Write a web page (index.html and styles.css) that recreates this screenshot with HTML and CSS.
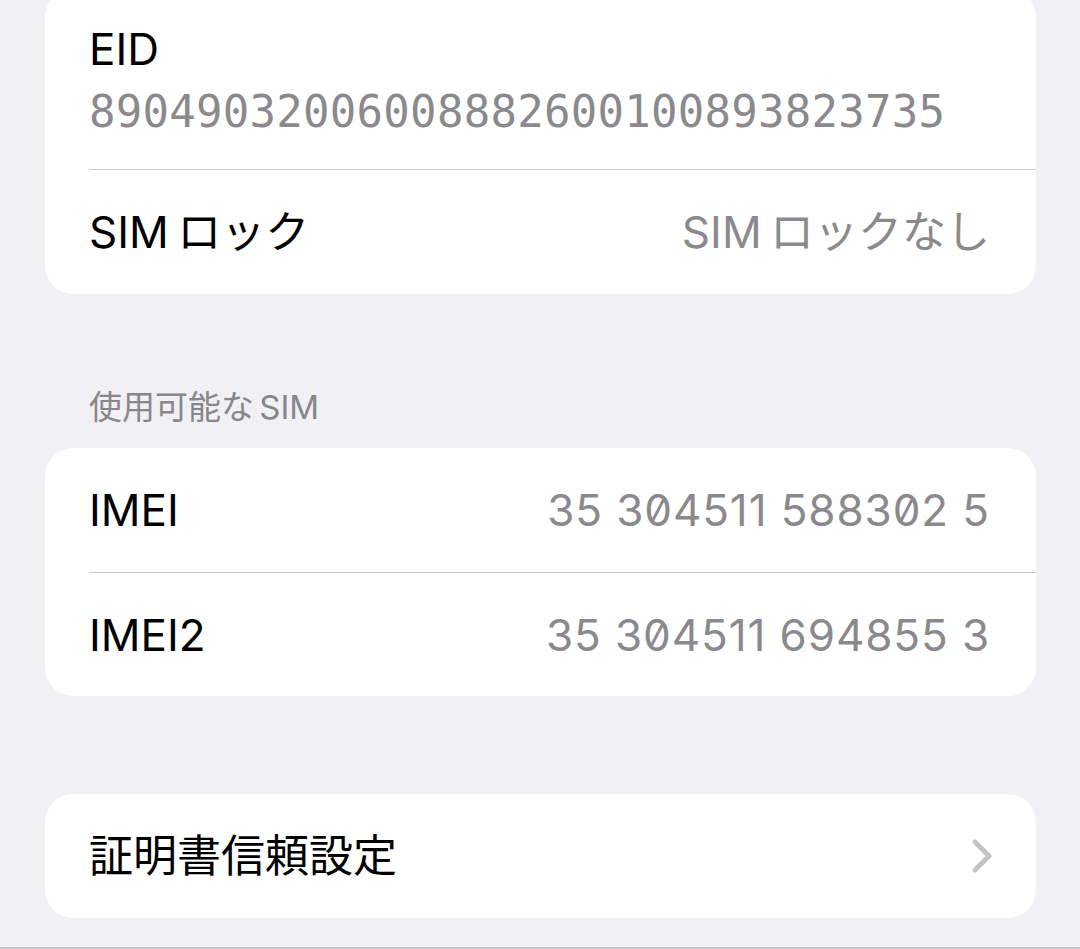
FILE: index.html
```html
<!DOCTYPE html>
<html lang="ja">
<head>
  <meta charset="UTF-8">
  <title>情報</title>
  <link rel="stylesheet" href="styles.css">
</head>
<body>

<div class="page">
  <div class="group group-first">
    <div class="row row-stack">
      <div class="label">EID</div>
      <div class="eid">89049032006008882600100893823735</div>
    </div>
    <div class="row">
      <div class="label mixed">SIM ロック</div>
      <div class="value mixed">SIM ロックなし</div>
    </div>
  </div>

  <div class="section-title mixed">使用可能な SIM</div>
  <div class="group">
    <div class="row">
      <div class="label">IMEI</div>
      <div class="value num">35 304511 588302 5</div>
    </div>
    <div class="row">
      <div class="label">IMEI2</div>
      <div class="value num">35 304511 694855 3</div>
    </div>
  </div>

  <div class="group group-last">
    <div class="row">
      <div class="label">証明書信頼設定</div>
      <svg class="chevron" width="20" height="34" viewBox="0 0 20 34">
        <path d="M3 3 L17 17 L3 31" fill="none" stroke="#c4c4c7" stroke-width="5" stroke-linecap="round" stroke-linejoin="round"/>
      </svg>
    </div>
  </div>
</div>

</body>
</html>
```

FILE: styles.css
```css
html, body {
  margin: 0;
  padding: 0;
}
body {
  background-color: #f0f0f5;
  font-family: Inter, "Noto Sans CJK JP", sans-serif;
  color: #000;
  overflow: hidden;
}
.page {
  height: 949px;
  box-sizing: border-box;
  border-bottom: 2px solid #c6c6ca;
  padding: 0 44px 0 45px;
  overflow: hidden;
}
.group {
  background-color: #fff;
  border-radius: 28px;
  padding-left: 44px;
}
.group-first {
  margin-top: -11px;
}
.group-first .row {
  height: 125px;
}
.group-last {
  margin-top: 98px;
}
.row {
  display: flex;
  align-items: center;
  justify-content: space-between;
  height: 124px;
  padding-right: 46px;
  box-sizing: border-box;
  border-top: 1px solid #c8c8cc;
  font-size: 44px;
}
.row:first-child {
  border-top: none;
}
.group-first .row-stack {
  flex-direction: column;
  align-items: flex-start;
  justify-content: flex-start;
  height: 180px;
  padding-top: 33px;
}
.label {
  line-height: 54px;
}
.value {
  color: #8a8a8e;
  line-height: 54px;
  font-feature-settings: "zero";
}
.num {
  letter-spacing: 0.9px;
}
.mixed {
  word-spacing: -4px;
}
.eid {
  color: #8a8a8e;
  line-height: 56px;
  font-size: 44px;
  font-family: "DejaVu Sans Mono", monospace;
  letter-spacing: 0.27px;
  margin-top: 8px;
}
.section-title {
  margin: 93px 0 21px 44px;
  line-height: 40px;
  font-size: 33px;
  color: #86868b;
}
.chevron {
  margin-right: -2px;
}
```
